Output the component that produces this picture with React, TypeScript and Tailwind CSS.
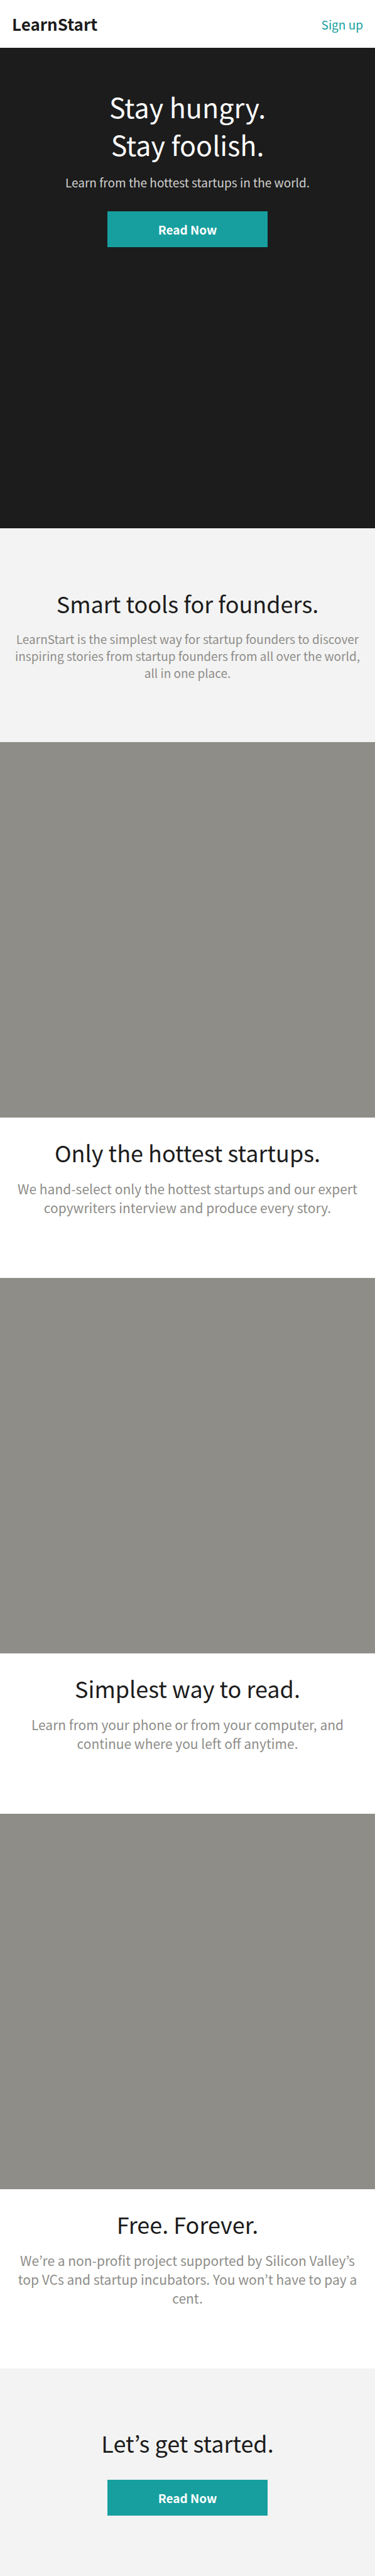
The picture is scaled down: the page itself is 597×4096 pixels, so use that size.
import React from "react";

const features = [
  {
    title: "Only the hottest startups.",
    text: "We hand-select only the hottest startups and our expert copywriters interview and produce every story.",
  },
  {
    title: "Simplest way to read.",
    text: "Learn from your phone or from your computer, and continue where you left off anytime.",
  },
  {
    title: "Free. Forever.",
    text: "We’re a non-profit project supported by Silicon Valley’s top VCs and startup incubators. You won’t have to pay a cent.",
  },
];

function ReadButton() {
  return (
    <button
      type="button"
      className="h-[57px] w-[255px] bg-[#179f9f] text-[19px] leading-[27px] font-bold text-white"
    >
      Read Now
    </button>
  );
}

function SectionTitle({ children }: { children: React.ReactNode }) {
  return <h2 className="text-[36px] leading-[45px]">{children}</h2>;
}

export default function App() {
  return (
    <div className="bg-white font-['Noto_Sans_CJK_KR',sans-serif] text-[#1c1c1c]">
      <header className="flex h-[76px] items-center justify-between px-[19px]">
        <a href="#" className="text-[26px] leading-[30px] font-bold">
          LearnStart
        </a>
        <a href="#signup" className="text-[19px] leading-[27px] text-[#179f9f]">
          Sign up
        </a>
      </header>

      <main>
        <section className="flex min-h-[764px] flex-col items-center bg-[#1c1c1c] px-[19px] pt-[63px] text-center">
          <h1 className="text-[43px] leading-[60px] text-white">
            Stay hungry.
            <br />
            Stay foolish.
          </h1>
          <p className="mt-[17px] mb-[33px] text-[19px] leading-[27px] text-[#d0d0cf]">
            Learn from the hottest startups in the world.
          </p>
          <ReadButton />
        </section>

        <section className="bg-[#f3f3f3] px-[19px] py-[97px] text-center">
          <SectionTitle>Smart tools for founders.</SectionTitle>
          <p className="mt-5 text-[19px] leading-[27px] text-[#8e8d89]">
            LearnStart is the simplest way for startup founders to discover
            inspiring stories from startup founders from all over the world, all
            in one place.
          </p>
        </section>

        {features.map((feature) => (
          <section key={feature.title}>
            <div className="aspect-square w-full bg-[#8e8d88]" />
            <div className="px-[19px] pt-[33px] pb-[97px] text-center">
              <SectionTitle>{feature.title}</SectionTitle>
              <p className="mt-5 text-[21px] leading-[30px] text-[#8e8d89]">
                {feature.text}
              </p>
            </div>
          </section>
        ))}
      </main>

      <footer
        id="signup"
        className="flex flex-col items-center gap-9 bg-[#f3f3f3] px-[19px] py-24 text-center"
      >
        <SectionTitle>Let’s get started.</SectionTitle>
        <ReadButton />
      </footer>
    </div>
  );
}
